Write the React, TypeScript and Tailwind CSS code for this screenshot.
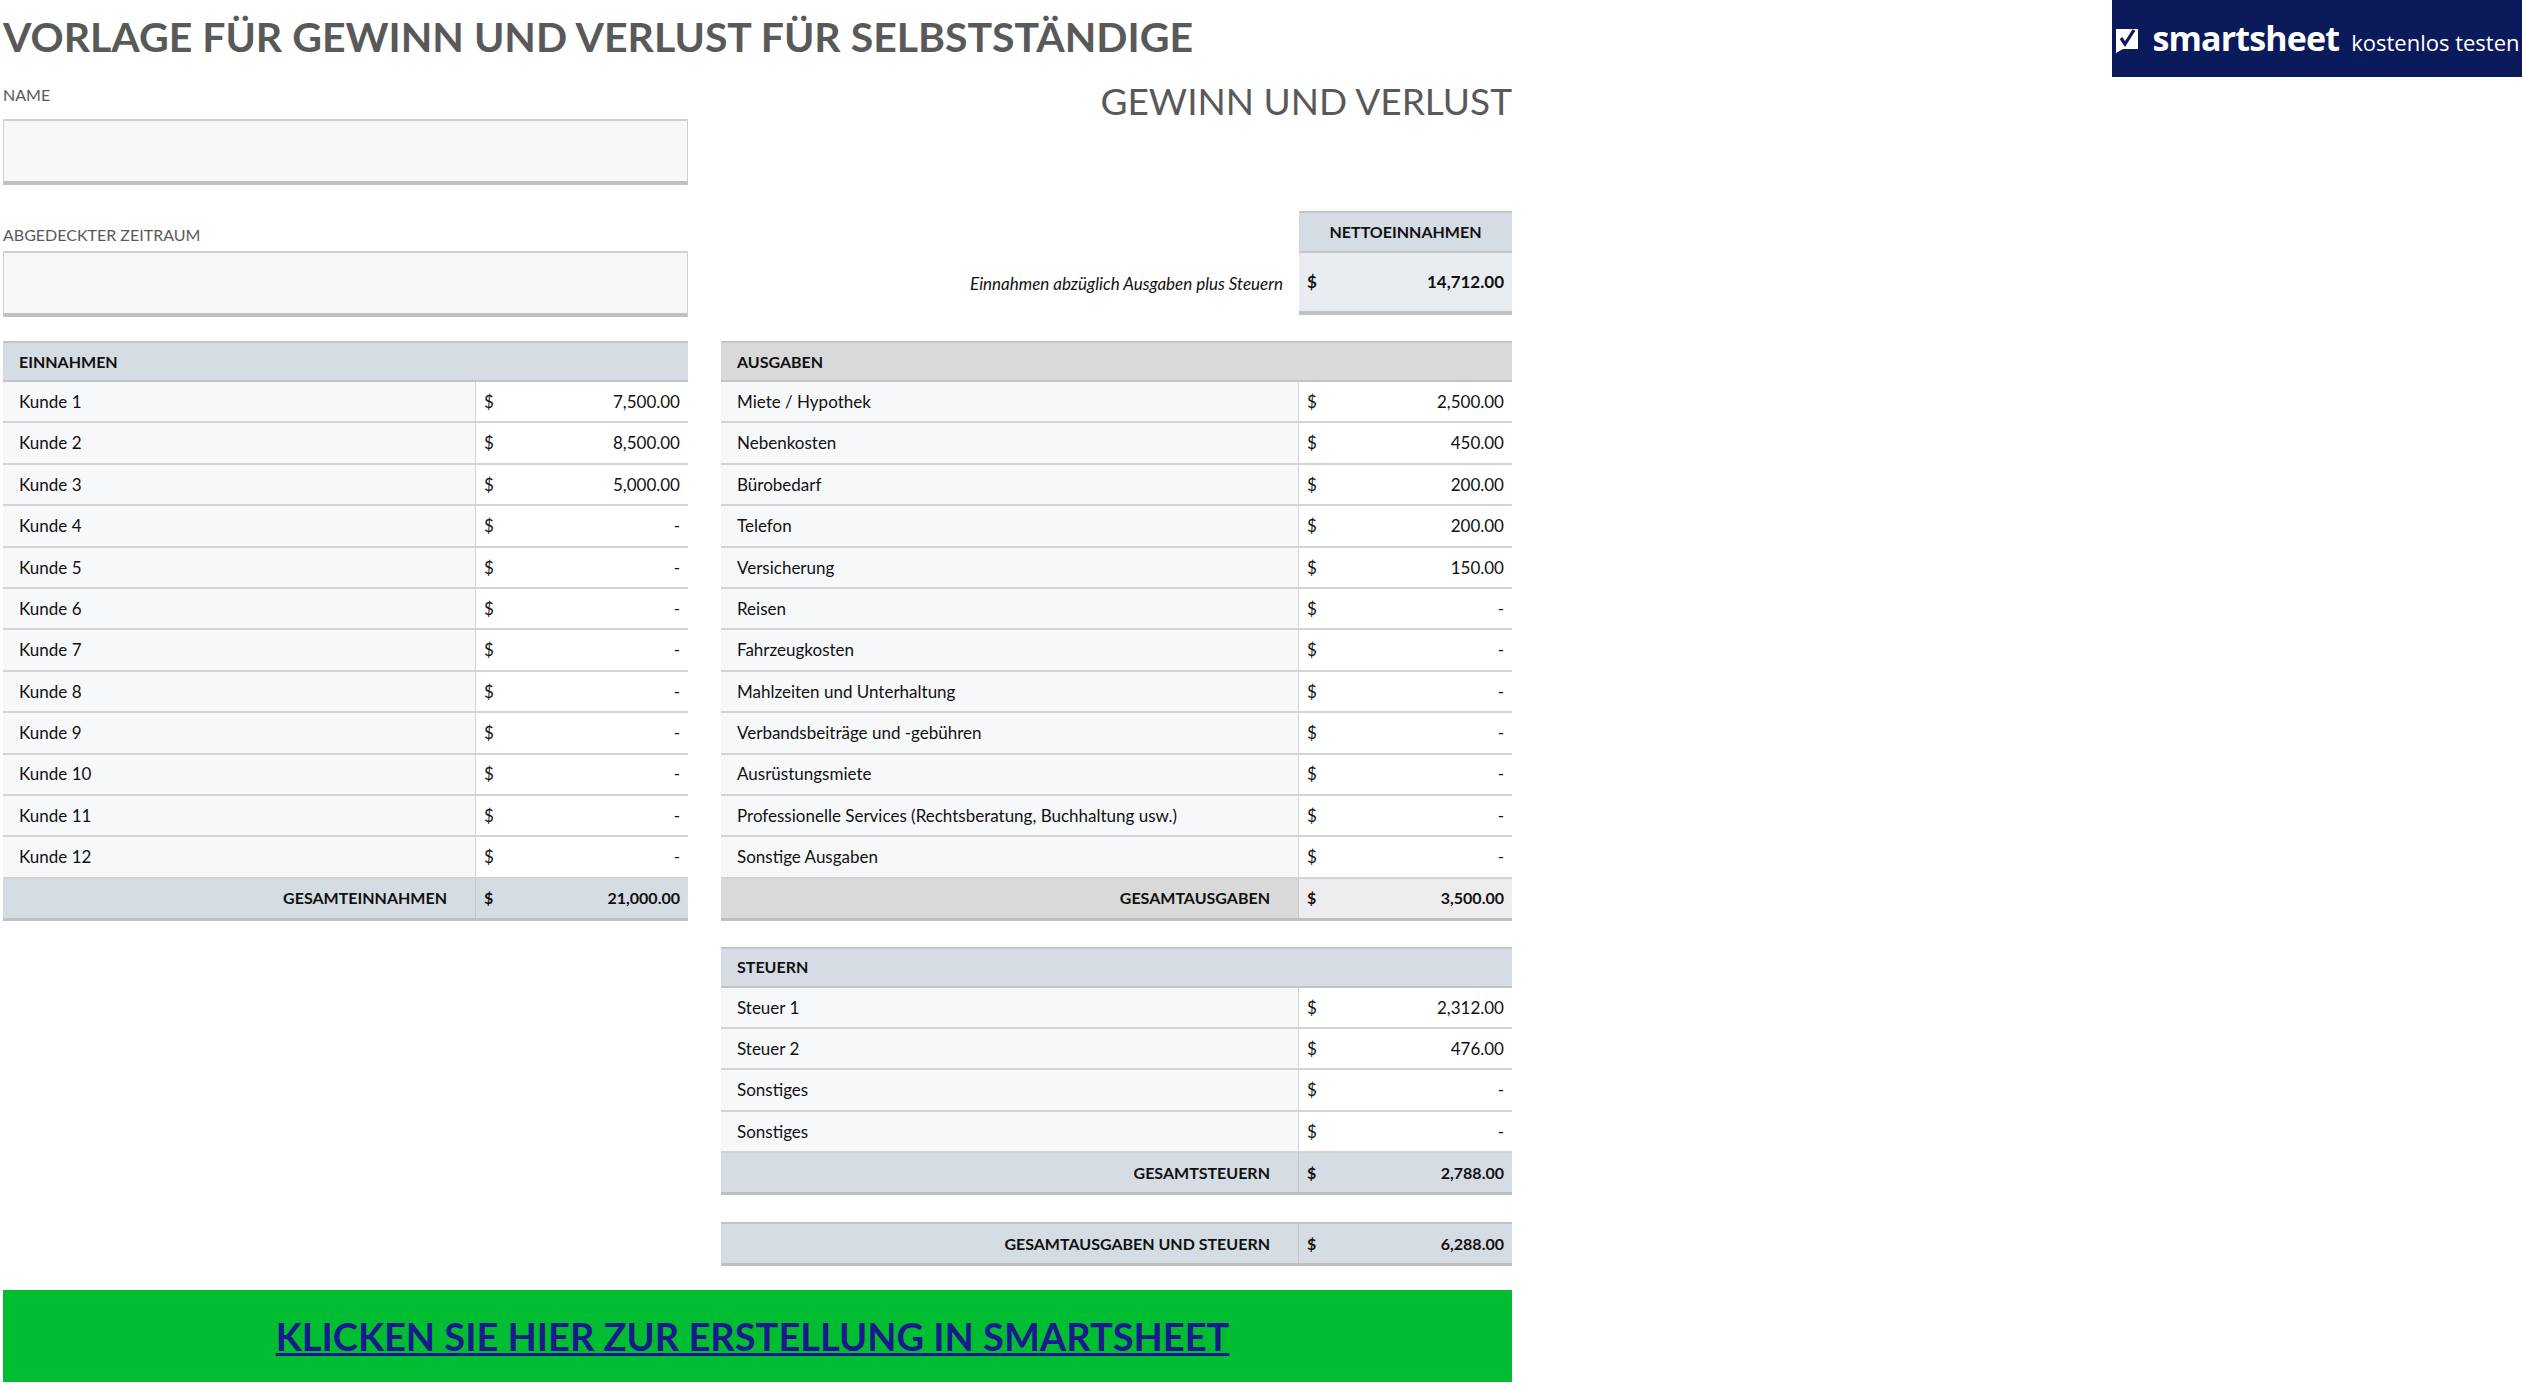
const font = { fontFamily: "Lato, 'Liberation Sans', sans-serif" };

type Row = [string, string];

const income: Row[] = [
  ["Kunde 1", "7,500.00"],
  ["Kunde 2", "8,500.00"],
  ["Kunde 3", "5,000.00"],
  ...Array.from({ length: 9 }, (_, i) => [`Kunde ${i + 4}`, "-"] as Row),
];

const expenses: Row[] = [
  ["Miete / Hypothek", "2,500.00"],
  ["Nebenkosten", "450.00"],
  ["Bürobedarf", "200.00"],
  ["Telefon", "200.00"],
  ["Versicherung", "150.00"],
  ["Reisen", "-"],
  ["Fahrzeugkosten", "-"],
  ["Mahlzeiten und Unterhaltung", "-"],
  ["Verbandsbeiträge und -gebühren", "-"],
  ["Ausrüstungsmiete", "-"],
  ["Professionelle Services (Rechtsberatung, Buchhaltung usw.)", "-"],
  ["Sonstige Ausgaben", "-"],
];

const taxes: Row[] = [
  ["Steuer 1", "2,312.00"],
  ["Steuer 2", "476.00"],
  ["Sonstiges", "-"],
  ["Sonstiges", "-"],
];

function DataRow({ label, value, amountW }: { label: string; value: string; amountW: string }) {
  return (
    <div className="flex h-[41.4px] border-b-2 border-[#d4d4d4] text-[17px] text-[#111]">
      <div className="flex-1 bg-[#f7f8fa] px-4 flex items-center border-r border-[#d4d4d4]">{label}</div>
      <div className={`${amountW} bg-white flex items-center justify-between px-2`}>
        <span>$</span>
        <span>{value}</span>
      </div>
    </div>
  );
}

function TotalRow({ label, value, amountW, bg, amountBg }: { label: string; value: string; amountW: string; bg: string; amountBg: string }) {
  return (
    <div className={`flex h-[42px] border-b-[3px] border-[#bfbfbf] text-[16px] font-bold text-[#111] ${bg}`}>
      <div className="flex-1 px-7 flex items-center justify-end border-r border-[#c8c8c8]">{label}</div>
      <div className={`${amountW} ${amountBg} flex items-center justify-between px-2`}>
        <span>$</span>
        <span>{value}</span>
      </div>
    </div>
  );
}

function Header({ title, bg }: { title: string; bg: string }) {
  return (
    <div className={`h-[41px] ${bg} border-t-2 border-b-2 border-[#c4c4c4] flex items-center px-4 text-[16px] font-bold text-[#111]`}>
      {title}
    </div>
  );
}

export default function App() {
  return (
    <div style={font} className="w-[2523px] h-[1387px] bg-white relative">
      <div className="absolute right-[1px] top-0 w-[410px] h-[77px] bg-[#0b1a5a] flex items-center justify-center gap-3 text-white">
        <svg width="26" height="28" viewBox="0 0 26 28">
          <path d="M2 4h22v20H9l-7 4z" fill="#fff" />
          <path d="M7 13l4 6 9-14" stroke="#0b1a5a" strokeWidth="3.2" fill="none" />
        </svg>
        <span className="text-[34px] font-bold tracking-tight" style={{ fontFamily: "'Open Sans', sans-serif" }}>smartsheet</span>
        <span className="text-[22px] pt-2" style={{ fontFamily: "'Open Sans', sans-serif" }}>kostenlos testen</span>
      </div>

      <div className="w-[1512px] pl-[3px]">
        <h1 className="text-[41px] font-bold text-[#595959] leading-none pt-[16px] h-[70px]">VORLAGE FÜR GEWINN UND VERLUST FÜR SELBSTSTÄNDIGE</h1>

        <div className="flex">
          <div className="w-[685px]">
            <div className="text-[16px] text-[#595959] h-[49px] flex items-center">NAME</div>
            <div className="h-[66px] bg-[#f7f8fa] border-t-2 border-x border-[#d0d0d0] border-b-[4px] border-b-[#c0c0c0]" />
            <div className="text-[16px] text-[#595959] h-[66px] flex items-end pb-[4px]">ABGEDECKTER ZEITRAUM</div>
            <div className="h-[66px] bg-[#f7f8fa] border-t-2 border-x border-[#d0d0d0] border-b-[4px] border-b-[#c0c0c0]" />
          </div>
          <div className="flex-1 flex flex-col items-end">
            <div className="text-[37px] text-[#595959] h-[70px] leading-none pt-[12px]">GEWINN UND VERLUST</div>
            <div className="h-[71px]" />
            <div className="flex items-end">
              <div className="italic text-[17px] text-[#111] pr-4 h-[62px] flex items-center">Einnahmen abzüglich Ausgaben plus Steuern</div>
              <div className="w-[213px]">
                <div className="h-[42px] bg-[#d6dce4] border-t-2 border-b-2 border-[#c4c4c4] flex items-center justify-center text-[16px] font-bold text-[#111]">NETTOEINNAHMEN</div>
                <div className="h-[62px] bg-[#e9edf2] border-b-[4px] border-[#c0c0c0] flex items-center justify-between px-2 text-[17px] font-bold text-[#111]">
                  <span>$</span>
                  <span>14,712.00</span>
                </div>
              </div>
            </div>
          </div>
        </div>

        <div className="flex justify-between mt-[24px]">
          <div className="w-[685px]">
            <Header title="EINNAHMEN" bg="bg-[#d6dce4]" />
            {income.map(([l, v], i) => (
              <DataRow key={i} label={l} value={v} amountW="w-[212px]" />
            ))}
            <TotalRow label="GESAMTEINNAHMEN" value="21,000.00" amountW="w-[212px]" bg="bg-[#d6dce4]" amountBg="bg-[#d6dce4]" />
          </div>
          <div className="w-[791px]">
            <Header title="AUSGABEN" bg="bg-[#d9d9d9]" />
            {expenses.map(([l, v], i) => (
              <DataRow key={i} label={l} value={v} amountW="w-[213px]" />
            ))}
            <TotalRow label="GESAMTAUSGABEN" value="3,500.00" amountW="w-[213px]" bg="bg-[#d9d9d9]" amountBg="bg-[#ededed]" />

            <div className="mt-[26px]">
              <Header title="STEUERN" bg="bg-[#d6dce4]" />
              {taxes.map(([l, v], i) => (
                <DataRow key={i} label={l} value={v} amountW="w-[213px]" />
              ))}
              <TotalRow label="GESAMTSTEUERN" value="2,788.00" amountW="w-[213px]" bg="bg-[#d6dce4]" amountBg="bg-[#d6dce4]" />
            </div>

            <div className="mt-[27px] border-t-2 border-[#c4c4c4]">
              <TotalRow label="GESAMTAUSGABEN UND STEUERN" value="6,288.00" amountW="w-[213px]" bg="bg-[#d6dce4]" amountBg="bg-[#d6dce4]" />
            </div>
          </div>
        </div>

        <div className="mt-[24px] h-[92px] bg-[#00bd32] flex items-center justify-center pr-[10px]">
          <span className="text-[38px] font-bold text-[#1a1a8c] underline">KLICKEN SIE HIER ZUR ERSTELLUNG IN SMARTSHEET</span>
        </div>
      </div>
    </div>
  );
}
